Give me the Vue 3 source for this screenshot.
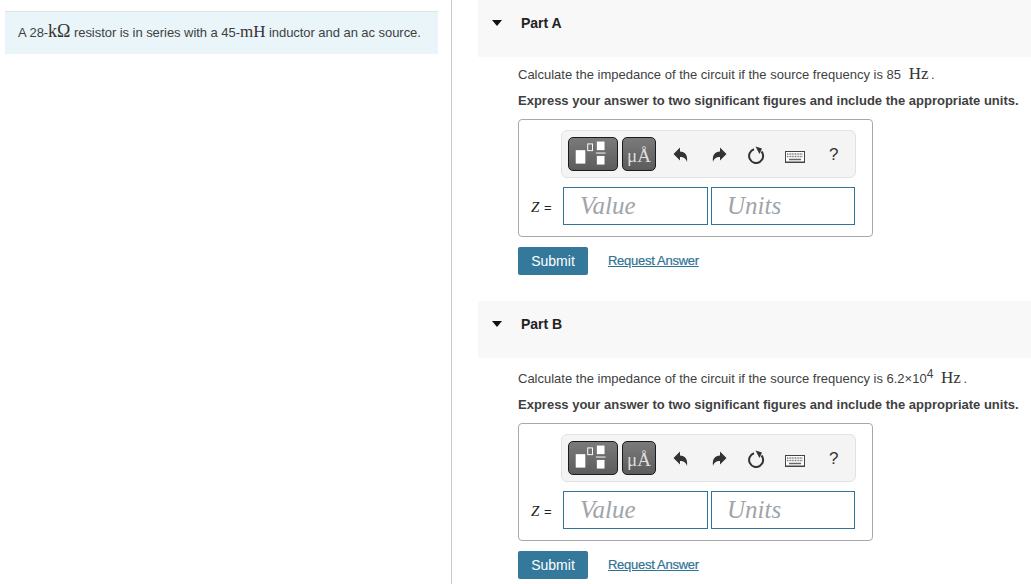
<script setup>
const parts = [
  { name: 'Part A', pre: '85', sup: '', post: '' },
  { name: 'Part B', pre: '6.2×10', sup: '4', post: '' }
]
</script>

<template>
  <div class="page">
    <aside class="left">
      <div class="callout">
        A 28-<span class="m k">kΩ</span> resistor is in series with a 45-<span class="m mh">mH</span> inductor and an ac source.
      </div>
    </aside>
    <main class="right">
      <section v-for="p in parts" :key="p.name" class="part">
        <header class="head">
          <span class="tri"></span>
          <span class="pname">{{ p.name }}</span>
        </header>
        <div class="body">
          <p class="q">Calculate the impedance of the circuit if the source frequency is {{ p.pre }}<sup v-if="p.sup">{{ p.sup }}</sup> <span class="m hz">Hz</span> .</p>
          <p class="ins">Express your answer to two significant figures and include the appropriate units.</p>
          <div class="box">
            <div class="toolbar">
              <button class="tb wide" aria-label="templates">
                <svg width="50" height="30" viewBox="0 0 50 30">
                  <rect x="7" y="11" width="10" height="14" fill="#fff" />
                  <rect x="19.500" y="4.500" width="5" height="7" fill="none" stroke="#fff" />
                  <rect x="29" y="2" width="8" height="9" fill="#fff" />
                  <rect x="28" y="13.500" width="10" height="1" fill="#fff" />
                  <rect x="29" y="17" width="8" height="9" fill="#fff" />
                </svg>
              </button>
              <button class="tb unit">μÅ</button>
              <svg class="ic first" width="16" height="16" viewBox="0 0 16 16"><path d="M.5 7 7 .5V4.500C12 4.500 15 8 14 15 13 11.500 11 10 7 10V13.500Z" fill="#333" /></svg>
              <svg class="ic redo" width="16" height="16" viewBox="0 0 16 16"><path d="M15.500 7 9 .5V4.500C4 4.500 1 8 2 15 3 11.500 5 10 9 10V13.500Z" fill="#333" /></svg>
              <svg class="ic reset" width="18" height="18" viewBox="0 0 18 18"><path d="M14.500 5.500A7 7 0 1 1 7 3.300" fill="none" stroke="#333" stroke-width="2" /><path d="M8.500 .5 15 2.500 12.500 8Z" fill="#333" /></svg>
              <svg class="ic kbd" width="20" height="14" viewBox="0 0 20 14">
                <rect x=".5" y="1.500" width="19" height="11" fill="#fff" stroke="#444" />
                <path d="M2 4h16M2 6.500h16" stroke="#777" stroke-width="1.500" stroke-dasharray="1 .6" />
                <path d="M4 9.500h12" stroke="#666" stroke-width="1.500" />
                <path d="M1 12h18" stroke="#444" />
              </svg>
              <span class="help">?</span>
            </div>
            <div class="row">
              <span class="label"><i>Z</i> <span class="eq">=</span></span>
              <div class="field">Value</div>
              <div class="field">Units</div>
            </div>
          </div>
          <div class="actions">
            <button class="submit">Submit</button>
            <a class="link">Request Answer</a>
          </div>
        </div>
      </section>
    </main>
  </div>
</template>

<style>
html, body { margin: 0; padding: 0; background: #fff; overflow: hidden; }
</style>

<style scoped>
.page {
  display: flex;
  width: 1031px;
  height: 584px;
  overflow: hidden;
  font-family: "Liberation Sans", Arial, sans-serif;
  font-size: 13px;
  color: #3f3f3f;
}
.left {
  box-sizing: border-box;
  width: 452px;
  padding: 11px 13px 0 5px;
  border-right: 1px solid #c8c8c8;
  flex: none;
}
.callout {
  box-sizing: border-box;
  height: 43px;
  padding-left: 13px;
  background: #e9f5f8;
  border-top: 1px solid #dde3e6;
  line-height: 39px;
  white-space: nowrap;
  letter-spacing: -.05px;
}
.m { font-family: "Liberation Serif", serif; color: #333; }
.k { font-size: 18px; }
.mh { font-size: 17px; }
.hz { font-size: 17px; margin-left: 4px; margin-right: -1px; }
.right { flex: none; width: 553px; margin-left: 26px; }
.part { height: 301px; }
.part + .part .body { padding-top: 3px; }
.head {
  display: flex;
  align-items: flex-start;
  height: 57px;
  background: #f8f8f8;
}
.tri {
  width: 0;
  height: 0;
  margin: 20px 0 0 14px;
  border-left: 5px solid transparent;
  border-right: 5px solid transparent;
  border-top: 6px solid #111;
}
.pname {
  margin: 15px 0 0 19px;
  font-size: 14px;
  font-weight: 700;
  line-height: 17px;
  color: #222;
}
.body { padding: 0 0 0 40px; }
.q {
  margin: 0;
  padding-top: 7px;
  height: 27px;
  line-height: 19px;
  white-space: nowrap;
}
.q sup { font-size: 12px; line-height: 0; }
.ins {
  margin: 0;
  height: 19px;
  line-height: 19px;
  font-weight: 700;
  white-space: nowrap;
}
.box {
  box-sizing: border-box;
  width: 355px;
  height: 118px;
  margin-top: 9px;
  padding: 10px 16px 0 42px;
  border: 1px solid #a8a8a8;
  border-radius: 4px;
}
.toolbar {
  box-sizing: border-box;
  display: flex;
  align-items: center;
  width: 295px;
  height: 48px;
  padding-left: 6px;
  background: #f4f4f4;
  border: 1px solid #e2e2e2;
  border-radius: 6px;
}
.tb {
  box-sizing: border-box;
  display: flex;
  align-items: center;
  justify-content: center;
  height: 34px;
  padding: 0;
  background: linear-gradient(#7a7a7a, #5c5c5c);
  border: 1px solid #1c1c1c;
  border-radius: 5px;
}
.wide { width: 50px; }
.unit {
  width: 34px;
  margin-left: 4px;
  padding-top: 4px;
  font-family: "Liberation Serif", serif;
  font-size: 19px;
  color: #ddd;
}
.ic { flex: none; margin-top: 2px; }
.first { margin-left: 17px; }
.redo { margin-left: 22px; }
.reset { margin-left: 20px; }
.kbd { margin-left: 20px; margin-top: 5px; }
.help { margin-left: 24px; margin-top: 2px; font-size: 17px; color: #333; }
.row { display: flex; align-items: center; margin-top: 9px; margin-left: -30px; }
.label {
  width: 32px;
  flex: none;
  padding-top: 2px;
  font-family: "Liberation Serif", serif;
  font-size: 15px;
  color: #222;
  white-space: nowrap;
}
.eq { font-family: "Liberation Sans", sans-serif; font-size: 13px; margin-left: 1px; }
.field {
  box-sizing: border-box;
  width: 145px;
  height: 38px;
  padding-left: 16px;
  border: 1px solid #2f7396;
  font-family: "Liberation Serif", serif;
  font-style: italic;
  font-size: 25px;
  line-height: 36px;
  color: #a0a4aa;
}
.field + .field { margin-left: 3px; width: 144px; padding-left: 15px; }
.actions { display: flex; align-items: center; margin-top: 10px; }
.submit {
  width: 70px;
  height: 28px;
  padding: 0;
  border: 0;
  border-radius: 2px;
  background: #34789b;
  color: #fff;
  font: 14px "Liberation Sans", Arial, sans-serif;
}
.link {
  margin-left: 20px;
  margin-top: -2px;
  font-size: 13px;
  color: #2f7396;
  text-decoration: underline;
  -webkit-text-stroke: .2px #2f7396;
  letter-spacing: -.28px;
}
</style>
